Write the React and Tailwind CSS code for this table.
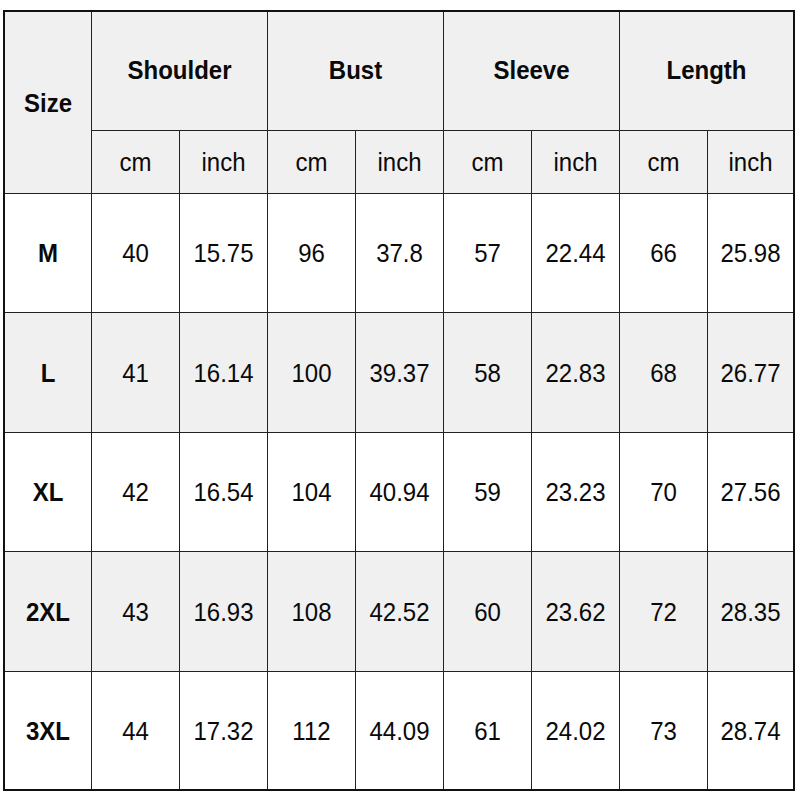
import React from 'react';

const groups = ['Shoulder', 'Bust', 'Sleeve', 'Length'];

const rows = [
  { size: 'M', values: ['40', '15.75', '96', '37.8', '57', '22.44', '66', '25.98'] },
  { size: 'L', values: ['41', '16.14', '100', '39.37', '58', '22.83', '68', '26.77'] },
  { size: 'XL', values: ['42', '16.54', '104', '40.94', '59', '23.23', '70', '27.56'] },
  { size: '2XL', values: ['43', '16.93', '108', '42.52', '60', '23.62', '72', '28.35'] },
  { size: '3XL', values: ['44', '17.32', '112', '44.09', '61', '24.02', '73', '28.74'] },
];

// text in the source image is a little stretched vertically
const T = ({ children }) => <span className="inline-block scale-y-[1.1]">{children}</span>;

const App = () => {
  return (
    <div
      className="w-[800px] h-[800px] bg-white pt-[10px] pl-[3px] text-[#0a0a0a]"
      style={{ fontFamily: '"Liberation Sans", Arial, sans-serif' }}
    >
      <div className="w-[792px] border-2 border-[#111] bg-[#222] grid grid-cols-[86px_repeat(7,87px)_1fr] grid-rows-[118px_62px_118px_119px_118px_119px_117px] gap-px">
        {/* Size header spans both header rows */}
        <div className="row-span-2 bg-[#f0f0f0] flex items-center justify-center text-[24px] font-bold">
          <T>Size</T>
        </div>
        {groups.map((g) => (
          <div key={g} className="col-span-2 bg-[#f0f0f0] flex items-center justify-center text-[24px] font-bold pb-[2px]">
            <T>{g}</T>
          </div>
        ))}
        {groups.map((g) => (
          <React.Fragment key={g + '-units'}>
            <div className="bg-[#f0f0f0] flex items-center justify-center text-[24px]"><T>cm</T></div>
            <div className="bg-[#f0f0f0] flex items-center justify-center text-[24px]"><T>inch</T></div>
          </React.Fragment>
        ))}

        {rows.map((row, i) => {
          const bg = i % 2 === 1 ? 'bg-[#f0f0f0]' : 'bg-white';
          return (
            <React.Fragment key={row.size}>
              <div className={`${bg} flex items-center justify-center text-[24px] font-bold`}><T>{row.size}</T></div>
              {row.values.map((v, j) => (
                <div key={j} className={`${bg} flex items-center justify-center text-[24px]`}>
                  <T>{v}</T>
                </div>
              ))}
            </React.Fragment>
          );
        })}
      </div>
    </div>
  );
};

export default App;
